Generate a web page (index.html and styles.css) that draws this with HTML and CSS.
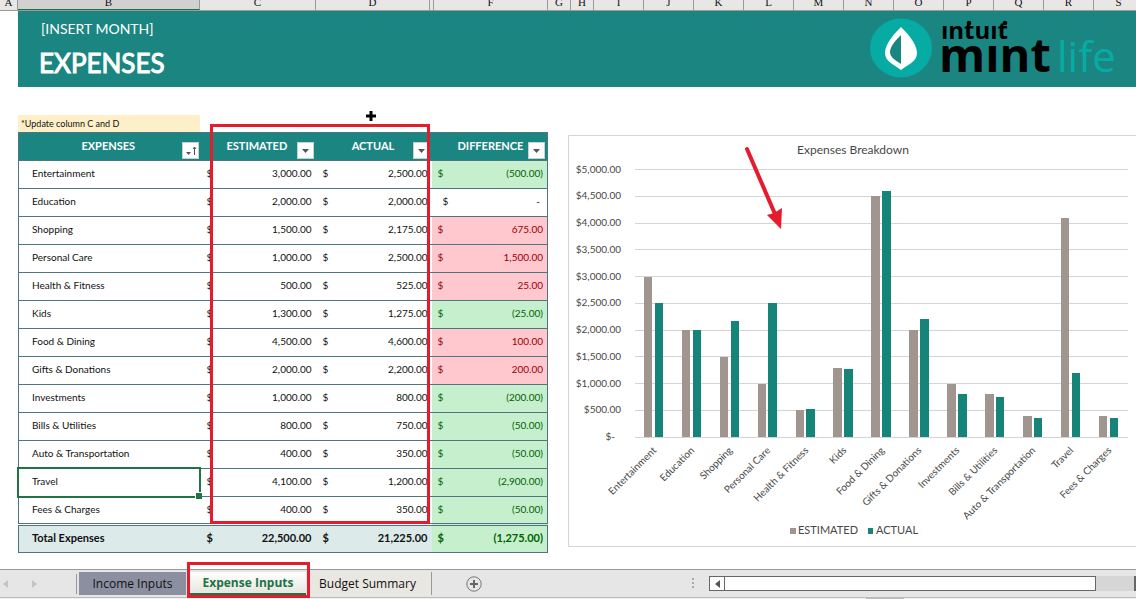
FILE: index.html
```html
<!DOCTYPE html>
<html lang="en">
<head>
<meta charset="utf-8">
<title>Expenses</title>
<link rel="stylesheet" href="styles.css">
</head>
<body>
<div class="columns" aria-hidden="true">
<span>A</span><span class="current">B</span><span>C</span><span>D</span><span></span><span>F</span><span>G</span><span>H</span><span>I</span><span>J</span><span>K</span><span>L</span><span>M</span><span>N</span><span>O</span><span>P</span><span>Q</span><span>R</span><span>S</span>
</div>
<main class="sheet">
<header class="banner">
<div class="titles">
<p class="month">[INSERT MONTH]</p>
<h1>EXPENSES</h1>
</div>
<svg class="logo" width="260" height="70" viewBox="0 0 260 70" role="img" aria-label="Intuit Mint Life">
<ellipse cx="31" cy="30" rx="31" ry="29.500" fill="#06aca4"/>
<path d="M31 9 C36 14 47 25 47 35 C47 44 37 47 31 52 C25 47 15 44 15 35 C15 25 26 14 31 9Z" fill="#fff"/>
<path d="M31 17 V46 C25 42 20 39 20 34 C20 28 27 21 31 17Z" fill="#1b8581"/>
<text class="logo-intuit" x="71" y="21">ıntuıt</text>
<circle cx="99" cy="5" r="2.300"/><circle cx="135" cy="5" r="2.300"/>
<text class="logo-mint" x="69" y="54">mınt</text>
<text class="logo-life" x="187" y="54">life</text>
</svg>
</header>
<div class="content">
<section class="ledger">
<p class="note">*Update column C and D</p>
<div class="table-wrap">
<table>
<colgroup><col class="c-name"><col class="c-est"><col class="c-act"><col class="c-diff"></colgroup>
<thead><tr>
<th>EXPENSES<button class="filter" aria-label="Sort expenses"><svg width="16" height="16" viewBox="0 0 16 16"><path d="M3 9h5l-2.500 3z" fill="#555"/><path d="M11.500 12V4M10 6l1.500-2L13 6" fill="none" stroke="#555"/></svg></button></th>
<th>ESTIMATED<button class="filter" aria-label="Filter estimated"><svg width="16" height="16" viewBox="0 0 16 16"><path d="M4 6h7l-3.500 4z" fill="#555"/></svg></button></th>
<th class="h-act">ACTUAL<button class="filter" aria-label="Filter actual"><svg width="16" height="16" viewBox="0 0 16 16"><path d="M4 6h7l-3.500 4z" fill="#555"/></svg></button></th>
<th>DIFFERENCE<button class="filter" aria-label="Filter difference"><svg width="16" height="16" viewBox="0 0 16 16"><path d="M4 6h7l-3.500 4z" fill="#555"/></svg></button></th>
</tr></thead>
<tbody>
<tr><td>Entertainment</td><td><div class="money"><span>$</span><span>3,000.00</span></div></td><td><div class="money"><span>$</span><span>2,500.00</span></div></td><td class="good"><div class="money"><span>$</span><span>(500.00)</span></div></td></tr>
<tr><td>Education</td><td><div class="money"><span>$</span><span>2,000.00</span></div></td><td><div class="money"><span>$</span><span>2,000.00</span></div></td><td class="zero"><div class="money"><span>$</span><span>-</span></div></td></tr>
<tr><td>Shopping</td><td><div class="money"><span>$</span><span>1,500.00</span></div></td><td><div class="money"><span>$</span><span>2,175.00</span></div></td><td class="bad"><div class="money"><span>$</span><span>675.00</span></div></td></tr>
<tr><td>Personal Care</td><td><div class="money"><span>$</span><span>1,000.00</span></div></td><td><div class="money"><span>$</span><span>2,500.00</span></div></td><td class="bad"><div class="money"><span>$</span><span>1,500.00</span></div></td></tr>
<tr><td>Health &amp; Fitness</td><td><div class="money"><span>$</span><span>500.00</span></div></td><td><div class="money"><span>$</span><span>525.00</span></div></td><td class="bad"><div class="money"><span>$</span><span>25.00</span></div></td></tr>
<tr><td>Kids</td><td><div class="money"><span>$</span><span>1,300.00</span></div></td><td><div class="money"><span>$</span><span>1,275.00</span></div></td><td class="good"><div class="money"><span>$</span><span>(25.00)</span></div></td></tr>
<tr><td>Food &amp; Dining</td><td><div class="money"><span>$</span><span>4,500.00</span></div></td><td><div class="money"><span>$</span><span>4,600.00</span></div></td><td class="bad"><div class="money"><span>$</span><span>100.00</span></div></td></tr>
<tr><td>Gifts &amp; Donations</td><td><div class="money"><span>$</span><span>2,000.00</span></div></td><td><div class="money"><span>$</span><span>2,200.00</span></div></td><td class="bad"><div class="money"><span>$</span><span>200.00</span></div></td></tr>
<tr><td>Investments</td><td><div class="money"><span>$</span><span>1,000.00</span></div></td><td><div class="money"><span>$</span><span>800.00</span></div></td><td class="good"><div class="money"><span>$</span><span>(200.00)</span></div></td></tr>
<tr><td>Bills &amp; Utilities</td><td><div class="money"><span>$</span><span>800.00</span></div></td><td><div class="money"><span>$</span><span>750.00</span></div></td><td class="good"><div class="money"><span>$</span><span>(50.00)</span></div></td></tr>
<tr><td>Auto &amp; Transportation</td><td><div class="money"><span>$</span><span>400.00</span></div></td><td><div class="money"><span>$</span><span>350.00</span></div></td><td class="good"><div class="money"><span>$</span><span>(50.00)</span></div></td></tr>
<tr><td class="selected">Travel</td><td><div class="money"><span>$</span><span>4,100.00</span></div></td><td><div class="money"><span>$</span><span>1,200.00</span></div></td><td class="good"><div class="money"><span>$</span><span>(2,900.00)</span></div></td></tr>
<tr><td>Fees &amp; Charges</td><td><div class="money"><span>$</span><span>400.00</span></div></td><td><div class="money"><span>$</span><span>350.00</span></div></td><td class="good"><div class="money"><span>$</span><span>(50.00)</span></div></td></tr>
</tbody>
<tfoot><tr><td>Total Expenses</td><td><div class="money"><span>$</span><span>22,500.00</span></div></td><td><div class="money"><span>$</span><span>21,225.00</span></div></td><td class="good"><div class="money"><span>$</span><span>(1,275.00)</span></div></td></tr></tfoot>
</table>
<div class="highlight"></div>
<svg class="cursor" width="12" height="12" viewBox="0 0 12 12"><path d="M6 1v10M1 6h10" stroke="#000" stroke-width="3"/></svg>
</div>
</section>
<section class="chart">
<svg viewBox="0 0 568 412" role="img" aria-label="Expenses Breakdown">
<path class="frame" d="M568 .5H.5V411.500H568"/>
<text class="chart-title" x="285" y="19" text-anchor="middle">Expenses Breakdown</text>
<path class="grid" d="M67 34.500H560M67 61.500H560M67 88.500H560M67 114.500H560M67 141.500H560M67 168.500H560M67 195.500H560M67 221.500H560M67 248.500H560M67 275.500H560M67 302.500H560"/>
<g class="axis" text-anchor="end">
<text x="53" y="38">$5,000.00</text><text x="53" y="64">$4,500.00</text><text x="53" y="91">$4,000.00</text><text x="53" y="118">$3,500.00</text><text x="53" y="145">$3,000.00</text><text x="53" y="171">$2,500.00</text><text x="53" y="198">$2,000.00</text><text x="53" y="225">$1,500.00</text><text x="53" y="252">$1,000.00</text><text x="53" y="278">$500.00</text><text x="47" y="305">$-</text>
</g>
<g class="estimated">
<rect x="76" y="142" width="8" height="160"/><rect x="114" y="195" width="8" height="107"/><rect x="152" y="222" width="8" height="80"/><rect x="190" y="249" width="8" height="53"/><rect x="228" y="275" width="8" height="27"/><rect x="265" y="233" width="9" height="69"/><rect x="303" y="61" width="9" height="241"/><rect x="341" y="195" width="9" height="107"/><rect x="379" y="249" width="9" height="53"/><rect x="417" y="259" width="9" height="43"/><rect x="455" y="281" width="9" height="21"/><rect x="493" y="83" width="8" height="219"/><rect x="531" y="281" width="8" height="21"/>
</g>
<g class="actual">
<rect x="87" y="168" width="8" height="134"/><rect x="125" y="195" width="8" height="107"/><rect x="163" y="186" width="8" height="116"/><rect x="200" y="168" width="9" height="134"/><rect x="238" y="274" width="9" height="28"/><rect x="276" y="234" width="9" height="68"/><rect x="314" y="56" width="9" height="246"/><rect x="352" y="184" width="9" height="118"/><rect x="390" y="259" width="9" height="43"/><rect x="428" y="262" width="8" height="40"/><rect x="466" y="283" width="8" height="19"/><rect x="504" y="238" width="8" height="64"/><rect x="542" y="283" width="8" height="19"/>
</g>
<g class="category" text-anchor="end">
<text transform="translate(89 316) rotate(-45)">Entertainment</text>
<text transform="translate(127 316) rotate(-45)">Education</text>
<text transform="translate(165 316) rotate(-45)">Shopping</text>
<text transform="translate(203 316) rotate(-45)">Personal Care</text>
<text transform="translate(241 316) rotate(-45)">Health &amp; Fitness</text>
<text transform="translate(279 316) rotate(-45)">Kids</text>
<text transform="translate(317 316) rotate(-45)">Food &amp; Dining</text>
<text transform="translate(354 316) rotate(-45)">Gifts &amp; Donations</text>
<text transform="translate(392 316) rotate(-45)">Investments</text>
<text transform="translate(430 316) rotate(-45)">Bills &amp; Utilities</text>
<text transform="translate(468 316) rotate(-45)">Auto &amp; Transportation</text>
<text transform="translate(506 316) rotate(-45)">Travel</text>
<text transform="translate(544 316) rotate(-45)">Fees &amp; Charges</text>
</g>
<g class="legend">
<rect class="estimated" x="222" y="393" width="6" height="6"/><text x="230" y="399">ESTIMATED</text>
<rect class="actual" x="300" y="393" width="5" height="6"/><text x="308" y="399">ACTUAL</text>
</g>
<path d="M179 14L207 79" stroke="#e51c2d" stroke-width="4" stroke-linecap="round"/>
<path d="M213 94L199 80L206 78L214 73Z" fill="#e51c2d"/>
</svg>
</section>
</div>
</main>
<footer class="tabbar">
<div class="arrows">
<button aria-label="Previous sheet"><svg width="5" height="8" viewBox="0 0 5 8"><path d="M5 0v8L0 4z" fill="#c4c4c4"/></svg></button>
<button aria-label="Next sheet"><svg width="5" height="8" viewBox="0 0 5 8"><path d="M0 0v8l5-4z" fill="#c4c4c4"/></svg></button>
</div>
<nav class="tabs">
<button class="tab income">Income Inputs</button>
<button class="tab active">Expense Inputs<span class="tab-highlight"></span></button>
<button class="tab budget">Budget Summary</button>
</nav>
<button class="add" aria-label="New sheet"><svg width="16" height="16" viewBox="0 0 16 16"><circle cx="8" cy="8" r="7.200" fill="none" stroke="#777"/><path d="M8 4v8M4 8h8" stroke="#666" stroke-width="2"/></svg></button>
<svg class="grip" width="3" height="12" viewBox="0 0 3 12"><path d="M0 1h2M0 5h2M0 9h2" stroke="#aaa" stroke-width="2"/></svg>
<div class="scroll">
<button class="scroll-left" aria-label="Scroll left"><svg width="5" height="8" viewBox="0 0 5 8"><path d="M5 0v8L0 4z" fill="#555"/></svg></button>
<div class="thumb"></div>
<div class="track"></div>
</div>
</footer>
<div class="status"><span></span></div>
</body>
</html>
```
FILE: styles.css
```css
* { box-sizing: border-box; }
body {
  margin: 0;
  height: 100vh;
  display: flex;
  flex-direction: column;
  overflow: hidden;
  background: #fff;
  color: #111;
  font-family: Lato, "Liberation Sans", sans-serif;
  font-size: 10px;
}
p, h1 { margin: 0; }
button { padding: 0; border: 0; background: none; font: inherit; color: inherit; }
svg { display: block; flex: none; }

.columns {
  display: grid;
  grid-template-columns: 18px 182px 116px 114px 4px 114px 23px 23px repeat(11, 50px);
  height: 11px;
  overflow: hidden;
  background: #e9e6e6;
  border-bottom: 1px solid #9b9b9b;
  font: 11px/10px "Liberation Serif", serif;
  flex: none;
}
.columns span {
  height: 14px;
  margin-top: -4px;
  padding-top: 1px;
  border-right: 1px solid #999;
  text-align: center;
}
.columns .current { background: #d2d0d0; border-bottom: 1px solid #217346; }

.sheet { flex: 1; min-height: 0; overflow: hidden; }
.banner {
  display: flex;
  justify-content: space-between;
  align-items: flex-start;
  height: 76px;
  margin-left: 18px;
  padding: 7px 6px 0 23px;
  background: #1b8581;
  color: #fff;
}
.month { font-size: 14px; line-height: 22px; }
h1 { padding-top: 8px; font-size: 26px; line-height: 30px; font-weight: 400; -webkit-text-stroke: 1px #fff; margin-left: -2px; }
.logo-intuit { font: 700 24px "Open Sans", sans-serif; }
.logo-mint { font: 700 47px "Open Sans", sans-serif; }
.logo-life { font: 400 42px "Open Sans", sans-serif; fill: #06aca4; }

.content {
  display: grid;
  grid-template-columns: 530px 1fr;
  column-gap: 20px;
  padding: 28px 0 0 18px;
}
.note {
  width: 182px;
  height: 17px;
  padding-left: 3px;
  background: #fdf0c8;
  font-size: 9px;
  line-height: 17px;
}
.table-wrap { position: relative; }
table {
  width: 100%;
  table-layout: fixed;
  border-collapse: collapse;
  border: 1px solid #4f7580;
}
.c-name { width: 182px; }
.c-est { width: 115px; }
.c-act { width: 116px; }
th {
  position: relative;
  height: 28px;
  padding: 0 29px 2px 26px;
  background: #1b8581;
  color: #fff;
  font-size: 11px;
  line-height: 14px;
}
.h-act { padding: 0 21px 2px 20px; }
.filter {
  position: absolute;
  right: 2px;
  bottom: 1px;
  width: 17px;
  height: 17px;
  background: #fff;
  border: 1px solid #c8d0d0;
}
td {
  height: 28px;
  padding: 0 0 3px 13px;
  border-top: 1px solid #4f7580;
  line-height: 14px;
}
td + td { padding: 0 4px 3px 6px; }
td:nth-child(3) { padding: 0 4px 3px 7px; }
.money { display: flex; justify-content: space-between; }
.good { background: #c6efce; color: #006100; }
.bad { background: #ffc7ce; color: #9c0006; }
.zero .money { padding: 0 3px 0 5px; }
.selected { position: relative; }
.selected::before {
  content: "";
  position: absolute;
  inset: -2px 0 -2px -2px;
  border: 2px solid #217346;
}
.selected::after {
  content: "";
  position: absolute;
  right: -1px;
  bottom: -3px;
  width: 6px;
  height: 6px;
  background: #217346;
  border: 1px solid #fff;
  border-width: 1px 0 0 1px;
}
tfoot td {
  border-top: 3px double #4f7580;
  background: #dcebea;
  font-weight: 700;
  font-size: 11px;
}
tfoot .good { background: #c6efce; }
.highlight {
  position: absolute;
  left: 192px;
  top: -8px;
  width: 220px;
  bottom: 29px;
  border: 3px solid #e51c2d;
}
.cursor { position: absolute; left: 347px; top: -22px; }

.chart { padding-top: 20px; }
.chart svg { width: 100%; }
.frame, .grid { fill: none; stroke: #d4d4d4; }
.chart text { fill: #484848; }
.chart-title { font-size: 12px; }
.axis, .category { font-size: 10px; }
.legend { font-size: 11px; }
.estimated { fill: #a0968f; }
.actual { fill: #168479; }

.tabbar {
  display: flex;
  align-items: center;
  height: 29px;
  flex: none;
  background: #e6e6e6;
  border-top: 1px solid #999;
  border-bottom: 1px solid #bbb;
  font: 12px "Open Sans", sans-serif;
}
.arrows { display: flex; gap: 24px; width: 77px; padding-left: 3px; border-right: 1px solid #999; height: 20px; }
.tabs { display: flex; align-self: stretch; padding: 2px 0 2px 2px; }
.tab { height: 23px; white-space: nowrap; }
.income { width: 107px; background: #8b8fa0; }
.active {
  position: relative;
  width: 116px;
  margin: 0 2px 0 4px;
  background: linear-gradient(#fff, #e6e6e0);
  border-bottom: 2px solid #217346;
  color: #217346;
  font-weight: 700;
}
.tab-highlight { position: absolute; inset: -10px -4px -5px -3px; border: 3px solid #e51c2d; }
.budget { width: 124px; padding-right: 4px; border-right: 1px solid #999; background: #e9e7e1; }
.add { margin-left: 34px; }
.grip { margin-left: auto; }
.scroll { display: flex; width: 427px; height: 15px; margin-left: 14px; background: #d6d6d6; border-right: 2px solid #666; }
.scroll-left { display: grid; place-items: center; width: 16px; background: #fff; border: 1px solid #666; }
.thumb { width: 372px; margin-left: -1px; background: #fff; border: 1px solid #666; }
.track { flex: 1; }
.status { height: 1px; flex: none; background: #f0f0f0; }
.status span { display: block; width: 38px; height: 1px; margin-left: 866px; background: #bbb; }
```
